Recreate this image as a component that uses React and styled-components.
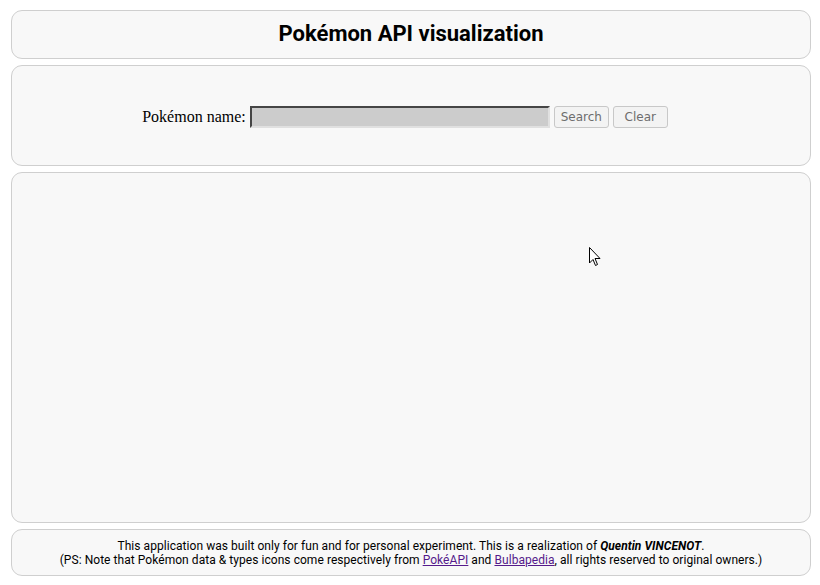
import React from 'react'
import styled, { createGlobalStyle } from 'styled-components'

const Global = createGlobalStyle`
  body {
    margin: 0;
    background: #ffffff;
    font-family: Roboto, "Liberation Sans", sans-serif;
  }
`

const Page = styled.div`
  position: relative;
  width: 800px;
  margin: 10px 0 0 11px;
  display: flex;
  flex-direction: column;
  gap: 6px;
`

const Panel = styled.div`
  box-sizing: border-box;
  height: ${p => p.h}px;
  background: #f8f8f8;
  border: 1px solid #cfcfcf;
  border-radius: 11px;
  display: flex;
  flex-direction: column;
  align-items: center;
  justify-content: center;
`

const Title = styled.h1`
  margin: 0 0 2px;
  font-family: Roboto, sans-serif;
  font-weight: 700;
  font-size: 22px;
  color: #000;
`

const SearchRow = styled.div`
  display: flex;
  align-items: center;
  gap: 4px;
  margin-left: -12px;
  margin-top: 2px;
`

const Label = styled.label`
  font-family: "Liberation Serif", serif;
  font-size: 16px;
  color: #000;
`

const Input = styled.input`
  box-sizing: border-box;
  width: 300px;
  height: 22px;
  background: #cccccc;
  border: 2px inset #999;
  border-right-color: #e0e0e0;
  border-bottom-color: #e0e0e0;
  outline: none;
`

const Button = styled.button`
  box-sizing: border-box;
  height: 22px;
  width: ${p => p.w}px;
  padding: 0;
  font-family: "DejaVu Sans", sans-serif;
  font-size: 12px;
  color: #6d6d6d;
  background: #f3f3f3;
  border: 1px solid #c8c8c8;
  border-radius: 3px;
`

const Footer = styled.p`
  margin: 0;
  font-family: Roboto, sans-serif;
  font-size: 12px;
  letter-spacing: 0.05px;
  line-height: 14px;
  text-align: center;
  color: #000;

  a {
    color: #551a8b;
  }
`

const Cursor = styled.svg`
  position: absolute;
  left: 578px;
  top: 237px;
`

export default function App() {
  return (
    <>
      <Global />
      <Page>
        <Panel h={49}>
          <Title>Pokémon API visualization</Title>
        </Panel>
        <Panel h={101}>
          <SearchRow>
            <Label>Pokémon name:</Label>
            <Input type="text" />
            <Button w={55}>Search</Button>
            <Button w={55}>Clear</Button>
          </SearchRow>
        </Panel>
        <Panel h={351} />
        <Panel h={47}>
          <Footer>
            This application was built only for fun and for personal experiment. This is a realization of <b><i>Quentin VINCENOT</i></b>.
            <br />
            (PS: Note that Pokémon data &amp; types icons come respectively from <a href="#">PokéAPI</a> and <a href="#">Bulbapedia</a>, all rights reserved to original owners.)
          </Footer>
        </Panel>
        <Cursor width="14" height="22" viewBox="0 0 14 22">
          <path d="M0.5 0.5 L0.5 16 L4 12.5 L6.5 18.5 L8.5 17.5 L6 11.5 L11 11.5 Z" fill="#fff" stroke="#000" strokeWidth="1" />
        </Cursor>
      </Page>
    </>
  )
}
